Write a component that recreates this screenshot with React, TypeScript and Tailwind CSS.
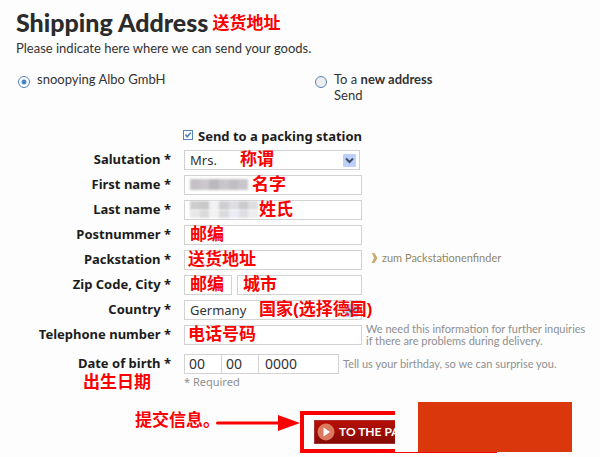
import React, { useState } from "react";

interface NoteProps {
  children: React.ReactNode;
  className?: string;
}

interface FormRowProps {
  label: string;
  htmlFor: string;
  hint?: React.ReactNode;
  children: React.ReactNode;
}

const inputClass =
  "block h-5 border border-[#d2d2d2] bg-white text-[#333] outline-none";

const hintClass =
  "ml-1 font-['Lato',sans-serif] text-[11px] leading-3 whitespace-nowrap text-[#8f8f8f]";

// Red translation next to a form element
const Note = ({ children, className = "" }: NoteProps) => (
  <span
    className={`whitespace-nowrap font-['Liberation_Sans','Noto_Sans_CJK_SC',sans-serif] text-[17px] leading-5 font-bold text-[#fb0000] ${className}`}
  >
    {children}
  </span>
);

const FieldNote = ({ children, className = "left-1" }: NoteProps) => (
  <Note className={`pointer-events-none absolute top-0 ${className}`}>
    {children}
  </Note>
);

const FormRow = ({ label, htmlFor, hint, children }: FormRowProps) => (
  <div className="flex h-5 items-center">
    <label
      htmlFor={htmlFor}
      className="w-[171px] shrink-0 pb-0.5 text-right text-[13px] leading-4 font-bold text-[#1c1c1c]"
    >
      {label} *
    </label>
    <div className="ml-[13px] shrink-0">{children}</div>
    {hint}
  </div>
);

const SelectArrow = () => (
  <svg
    className="pointer-events-none absolute top-1 right-1"
    width="13"
    height="13"
    viewBox="0 0 13 13"
  >
    <rect width="13" height="13" rx="1" fill="#bdd0fa" />
    <path d="M3 4.5 6.5 8 10 4.5" fill="none" stroke="#3f4c67" strokeWidth="2" />
  </svg>
);

const Mosaic = ({ colors, className }: { colors: string[]; className: string }) => (
  <div className={`pointer-events-none absolute flex overflow-hidden blur-[1px] ${className}`}>
    {colors.map((color, index) => (
      <span key={index} className={`flex-1 ${color}`} />
    ))}
  </div>
);

const App = () => {
  const [target, setTarget] = useState<string>("existing");
  const [packing, setPacking] = useState<boolean>(true);

  return (
    <main className="min-h-screen bg-[#fdfdfd] pt-2 font-['Lato',sans-serif] text-[#333]">
      {/* Heading */}
      <div className="flex items-center gap-1 pl-4">
        <h1 className="text-[25px] leading-7 font-black text-[#2b2b2b]">
          Shipping Address
        </h1>
        <Note className="mt-1">送货地址</Note>
      </div>
      <p className="pl-4 text-[13px] leading-6">
        Please indicate here where we can send your goods.
      </p>

      {/* Address choice */}
      <div className="mt-[11px] flex pl-[18px] text-[13px] leading-4">
        <label className="flex w-[297px] gap-[7px]">
          <input
            type="radio"
            name="target"
            checked={target === "existing"}
            onChange={() => setTarget("existing")}
            className="mt-[5px] size-3 appearance-none rounded-full border border-[#5584b5] bg-white checked:bg-[radial-gradient(circle,#4384c4_2px,#fff_3px)]"
          />
          snoopying Albo GmbH
        </label>
        <label className="flex gap-[7px]">
          <input
            type="radio"
            name="target"
            checked={target === "new"}
            onChange={() => setTarget("new")}
            className="mt-[5px] size-3 appearance-none rounded-full border border-[#5584b5] bg-[#eee] checked:bg-[radial-gradient(circle,#4384c4_2px,#fff_3px)]"
          />
          <span>
            To a <b>new address</b>
            <br />
            Send
          </span>
        </label>
      </div>

      {/* Address form */}
      <form className="mt-6 font-['Noto_Sans',sans-serif]" onSubmit={(e) => e.preventDefault()}>
        <label className="ml-[183px] flex h-5 items-center gap-[5px] text-[13px] font-bold text-[#1c1c1c]">
          <span className="relative -mt-1 block size-[10px]">
            <input
              type="checkbox"
              checked={packing}
              onChange={(e) => setPacking(e.target.checked)}
              className="block size-[10px] appearance-none border border-[#5584b5] bg-white"
            />
            {packing && (
              <svg className="pointer-events-none absolute inset-0" width="10" height="10" viewBox="0 0 10 10">
                <path d="M2.5 4.5 4.2 6.8 7.8 2.8" fill="none" stroke="#4384c4" strokeWidth="1.6" />
              </svg>
            )}
          </span>
          Send to a packing station
        </label>

        <div className="mt-[3px] flex flex-col gap-[5px]">
          <FormRow label="Salutation" htmlFor="salutation">
            <div className="relative">
              <select id="salutation" className={`${inputClass} w-[176px] appearance-none px-[5px] text-[13px]`}>
                <option>Mrs.</option>
                <option>Mr.</option>
              </select>
              <SelectArrow />
              <FieldNote className="left-14">称谓</FieldNote>
            </div>
          </FormRow>
          <FormRow label="First name" htmlFor="first-name">
            <div className="relative">
              <input id="first-name" type="text" className={`${inputClass} w-[178px] px-1 text-sm`} />
              <Mosaic
                className="top-1 left-1.5 h-[11px] w-[58px]"
                colors={["bg-[#c4c0c5]", "bg-[#cbc8cc]", "bg-[#bbb8be]", "bg-[#c9c6ca]", "bg-[#c2bfc4]", "bg-[#c8c6ca]"]}
              />
              <FieldNote className="left-[68px]">名字</FieldNote>
            </div>
          </FormRow>
          <FormRow label="Last name" htmlFor="last-name">
            <div className="relative">
              <input id="last-name" type="text" className={`${inputClass} w-[178px] px-1 text-sm`} />
              <Mosaic
                className="top-px left-1.5 h-[9px] w-[68px]"
                colors={["bg-[#cecdce]", "bg-[#c8c8c9]", "bg-[#f0f0f2]", "bg-[#cfcfd2]", "bg-[#dedee2]", "bg-[#cbcbcf]", "bg-[#dddddf]"]}
              />
              <Mosaic
                className="top-[10px] left-1.5 h-2 w-[68px]"
                colors={["bg-[#e7e7e8]", "bg-[#dadadb]", "bg-[#f2f2f3]", "bg-[#dadadc]", "bg-[#ececf5]", "bg-[#dedee2]", "bg-[#eeeef0]"]}
              />
              <FieldNote className="left-[75px]">姓氏</FieldNote>
            </div>
          </FormRow>
          <FormRow label="Postnummer" htmlFor="postnummer">
            <div className="relative">
              <input id="postnummer" type="text" className={`${inputClass} w-[178px] px-1 text-sm`} />
              <FieldNote className="left-1.5">邮编</FieldNote>
            </div>
          </FormRow>
          <FormRow
            label="Packstation"
            htmlFor="packstation"
            hint={
              <a href="#" className="ml-[9px] flex items-center gap-1 pb-1 font-['Lato',sans-serif] text-[11px] leading-3 text-[#8f8768]">
                <svg width="7" height="10" viewBox="0 0 7 10">
                  <path d="M1 0h2.5L6.5 5 3.5 10H.5L3 5z" fill="#c9ab74" />
                </svg>
                zum Packstationenfinder
              </a>
            }
          >
            <div className="relative">
              <input id="packstation" type="text" className={`${inputClass} w-[178px] px-1 text-sm`} />
              <FieldNote>送货地址</FieldNote>
            </div>
          </FormRow>
          <FormRow label="Zip Code, City" htmlFor="zip">
            <div className="flex gap-[5px]">
              <div className="relative">
                <input id="zip" type="text" className={`${inputClass} w-12 px-1 text-sm`} />
                <FieldNote className="left-1.5">邮编</FieldNote>
              </div>
              <div className="relative">
                <input type="text" aria-label="City" className={`${inputClass} w-[125px] px-1 text-sm`} />
                <FieldNote className="left-1.5">城市</FieldNote>
              </div>
            </div>
          </FormRow>
          <FormRow label="Country" htmlFor="country">
            <div className="relative">
              <select id="country" className={`${inputClass} w-[178px] appearance-none px-[5px] text-[13px]`}>
                <option>Germany</option>
                <option>Austria</option>
              </select>
              <SelectArrow />
              <FieldNote className="left-[75px]">国家(选择德国)</FieldNote>
            </div>
          </FormRow>
          <FormRow
            label="Telephone number"
            htmlFor="telephone"
            hint={
              <p className={hintClass}>
                We need this information for further inquiries
                <br />
                if there are problems during delivery.
              </p>
            }
          >
            <div className="relative">
              <input id="telephone" type="tel" className={`${inputClass} w-[178px] px-1 text-sm`} />
              <FieldNote>电话号码</FieldNote>
            </div>
          </FormRow>
        </div>

        <div className="mt-[9px]">
          <FormRow
            label="Date of birth"
            htmlFor="birth-day"
            hint={
              <p className={hintClass}>
                Tell us your birthday, so we can surprise you.
              </p>
            }
          >
            <div className="flex">
              <input id="birth-day" type="text" defaultValue="00" className={`${inputClass} w-[38px] px-1 text-sm`} />
              <input type="text" aria-label="Month" defaultValue="00" className={`${inputClass} -ml-px w-[38px] px-1 text-sm`} />
              <input type="text" aria-label="Year" defaultValue="0000" className={`${inputClass} -ml-px w-[81px] px-1.5 text-sm`} />
            </div>
          </FormRow>
          <div className="flex h-[21px]">
            <div className="-mt-1 w-[171px] pr-5 text-right">
              <Note>出生日期</Note>
            </div>
            <p className="ml-[13px] text-[11px] leading-4 text-[#8f8f8f]">* Required</p>
          </div>
        </div>

        {/* Submit */}
        <div className="mt-4 flex items-start pl-[135px]">
          <Note>提交信息。</Note>
          <svg className="mt-1 -ml-1" width="84" height="16" viewBox="0 0 84 16">
            <path d="M1.5 8H64" stroke="#fb0000" strokeWidth="3" strokeLinecap="round" />
            <path d="M62 0 84 8 62 16z" fill="#fb0000" />
          </svg>
          <div className="relative w-[197px] border-4 border-[#fb0000] py-[5px] pl-2.5">
            <button
              type="submit"
              className="flex h-6 w-40 items-center gap-1 border border-[#a33] bg-linear-to-b from-[#b80f05] to-[#850a04] pl-0.5 font-['Lato',sans-serif] text-xs font-bold text-white"
            >
              <svg width="18" height="18" viewBox="0 0 18 18">
                <circle cx="9" cy="9" r="8.5" fill="#dc7a60" />
                <path d="M6.5 4.5 13 9l-6.5 4.5z" fill="#fff" />
              </svg>
              TO THE PAYMENT
            </button>
            {/* Cover over the right part of the button */}
            <div className="absolute -top-[13px] left-[91px] h-[50px] w-[177px] bg-[#fdfdfd] pl-[23px]">
              <div className="h-full w-[154px] bg-[#db370c]" />
            </div>
          </div>
        </div>
      </form>
    </main>
  );
};

export default App;
